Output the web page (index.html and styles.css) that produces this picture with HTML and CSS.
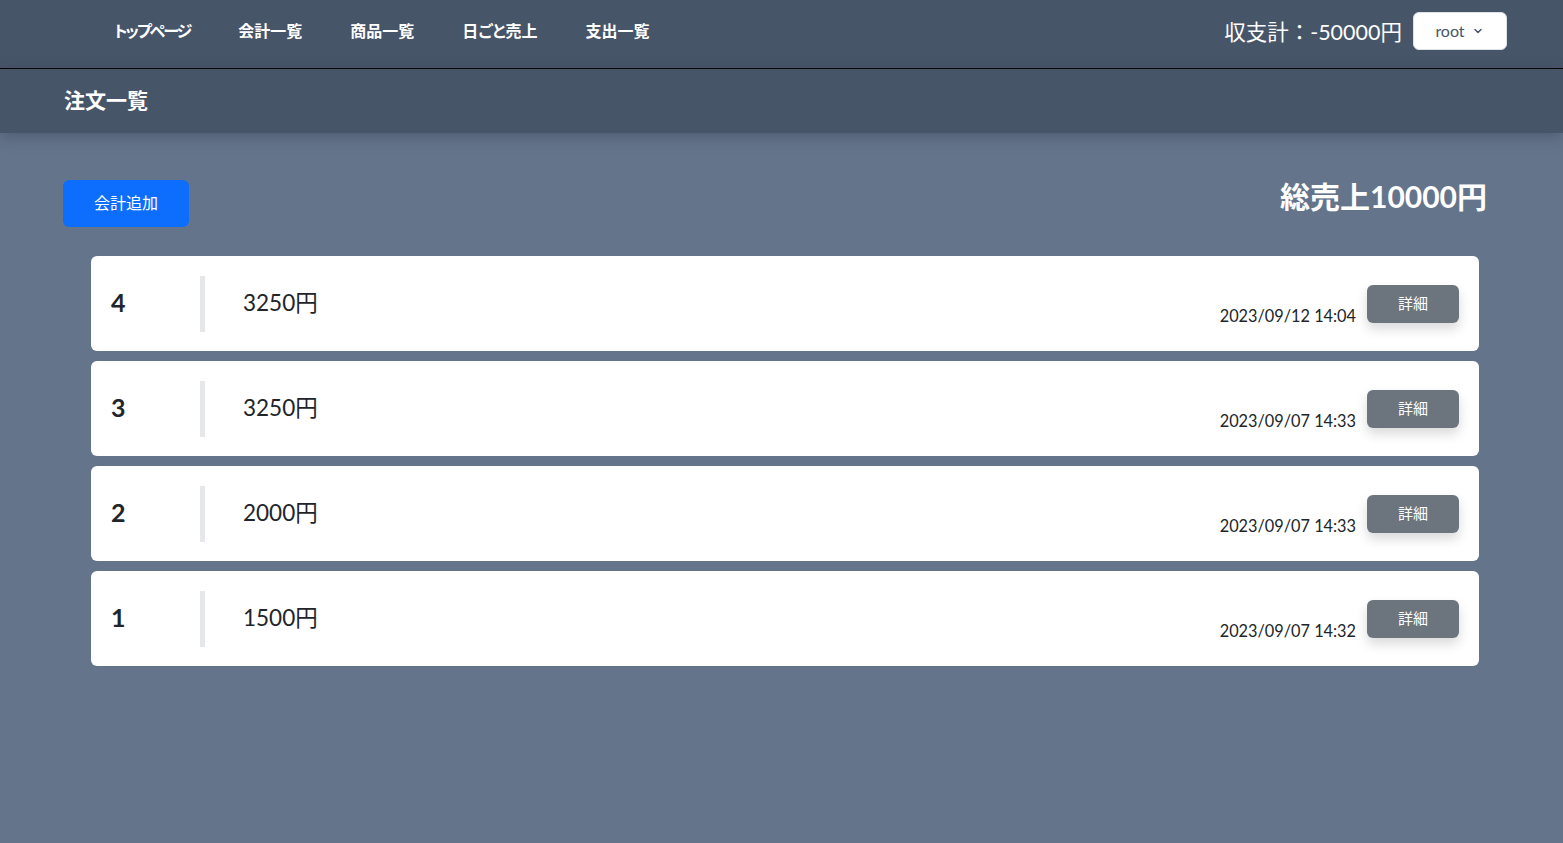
FILE: index.html
```html
<!DOCTYPE html>
<html lang="ja">
<head>
<meta charset="utf-8">
<title>注文一覧</title>
<link rel="stylesheet" href="styles.css">
</head>
<body>
<header class="topnav">
  <nav class="nav-links">
    <a class="nav-link kana">トップページ</a>
    <a class="nav-link">会計一覧</a>
    <a class="nav-link">商品一覧</a>
    <a class="nav-link">日ごと売上</a>
    <a class="nav-link">支出一覧</a>
  </nav>
  <div class="nav-right">
    <span class="balance">収支計：-50000円</span>
    <button class="user-btn">root <svg class="chev" width="10" height="10" viewBox="0 0 10 10"><path d="M2 3.5 L5 6.5 L8 3.5" fill="none" stroke="#475569" stroke-width="1.5" stroke-linecap="round" stroke-linejoin="round"/></svg></button>
  </div>
</header>
<div class="pagehead">
  <h1 class="page-title">注文一覧</h1>
</div>
<main class="content">
  <div class="toolbar">
    <button class="add-btn">会計追加</button>
    <h2 class="total">総売上10000円</h2>
  </div>
  <div class="list">
    <div class="card">
      <div class="num">4</div>
      <div class="divider"></div>
      <div class="price">3250円</div>
      <div class="date">2023/09/12 14:04</div>
      <button class="detail-btn">詳細</button>
    </div>
    <div class="card">
      <div class="num">3</div>
      <div class="divider"></div>
      <div class="price">3250円</div>
      <div class="date">2023/09/07 14:33</div>
      <button class="detail-btn">詳細</button>
    </div>
    <div class="card">
      <div class="num">2</div>
      <div class="divider"></div>
      <div class="price">2000円</div>
      <div class="date">2023/09/07 14:33</div>
      <button class="detail-btn">詳細</button>
    </div>
    <div class="card">
      <div class="num">1</div>
      <div class="divider"></div>
      <div class="price">1500円</div>
      <div class="date">2023/09/07 14:32</div>
      <button class="detail-btn">詳細</button>
    </div>
  </div>
</main>
</body>
</html>
```
FILE: styles.css
```css
* { box-sizing: border-box; }
html, body { margin: 0; padding: 0; }
body {
  background: #64748b;
  font-family: Lato, "Noto Sans CJK JP", sans-serif;
  color: #212529;
  min-height: 843px;
}
button { font-family: inherit; cursor: pointer; }

.topnav {
  height: 69px;
  background: #475569;
  border-bottom: 1px solid #000;
  display: flex;
  align-items: center;
  justify-content: space-between;
  padding: 0 56px 0 90px;
}
.nav-links { display: flex; align-items: center; }
.nav-link {
  color: #fff;
  font-family: "Noto Sans CJK JP", sans-serif;
  font-feature-settings: "palt";
  font-weight: 700;
  font-size: 16px;
  padding: 0 24px;
  text-decoration: none;
  line-height: 22px;
  margin-top: -8px;
}
.nav-link.kana { letter-spacing: -2px; }
.nav-right { display: flex; align-items: center; gap: 11px; margin-top: -7px; }
.balance {
  color: #fff;
  font-size: 21.5px;
  font-family: Lato, "Noto Sans CJK JP", sans-serif;
}
.user-btn {
  width: 94px;
  height: 38px;
  background: #fff;
  border: 1px solid #dee2e6;
  border-radius: 6px;
  font-size: 16px;
  color: #475569;
  display: flex;
  align-items: center;
  justify-content: center;
  gap: 8px;
  padding: 0 2px 0 0;
}
.chev { display: block; }

.pagehead {
  height: 64px;
  background: #475569;
  display: flex;
  align-items: center;
  padding: 0 64px;
  box-shadow: 0 4px 14px rgba(40, 50, 70, 0.35);
  position: relative;
}
.page-title {
  margin: -4px 0 0 0;
  color: #fff;
  font-family: "Noto Sans CJK JP", sans-serif;
  font-size: 21px;
  font-weight: 700;
}

.content { padding: 47px 76px 0 63px; }
.toolbar {
  display: flex;
  align-items: center;
  justify-content: space-between;
}
.add-btn {
  width: 126px;
  height: 47px;
  background: #0d6efd;
  color: #fff;
  border: none;
  border-radius: 6px;
  font-family: "Noto Sans CJK JP", sans-serif;
  font-size: 16px;
  padding: 0 0 3px 0;
}
.total {
  margin: -17px 0 0 0;
  color: #fff;
  font-size: 30px;
  font-weight: 700;
}

.list {
  margin: 29px 8px 0 28px;
  display: flex;
  flex-direction: column;
  gap: 10px;
}
.card {
  height: 95px;
  background: #fff;
  border-radius: 6px;
  display: flex;
  align-items: center;
  padding: 0 20px 0 20px;
}
.num {
  width: 89px;
  font-size: 25px;
  font-weight: 700;
  color: #212529;
  margin-top: -3px;
}
.divider {
  width: 5px;
  height: 56px;
  background: #e5e7eb;
}
.price {
  margin-left: 38px;
  font-size: 22.5px;
  flex: 1;
  margin-top: -5px;
}
.date {
  font-size: 16.3px;
  align-self: flex-end;
  margin-bottom: 26px;
  margin-right: 11px;
}
.detail-btn {
  width: 92px;
  height: 38px;
  background: #6c757d;
  color: #fff;
  border: none;
  border-radius: 6px;
  font-family: "Noto Sans CJK JP", sans-serif;
  font-size: 15px;
  box-shadow: 0 6px 12px rgba(0, 0, 0, 0.15);
  margin-top: 0;
  padding: 0 0 2px 0;
}
```
